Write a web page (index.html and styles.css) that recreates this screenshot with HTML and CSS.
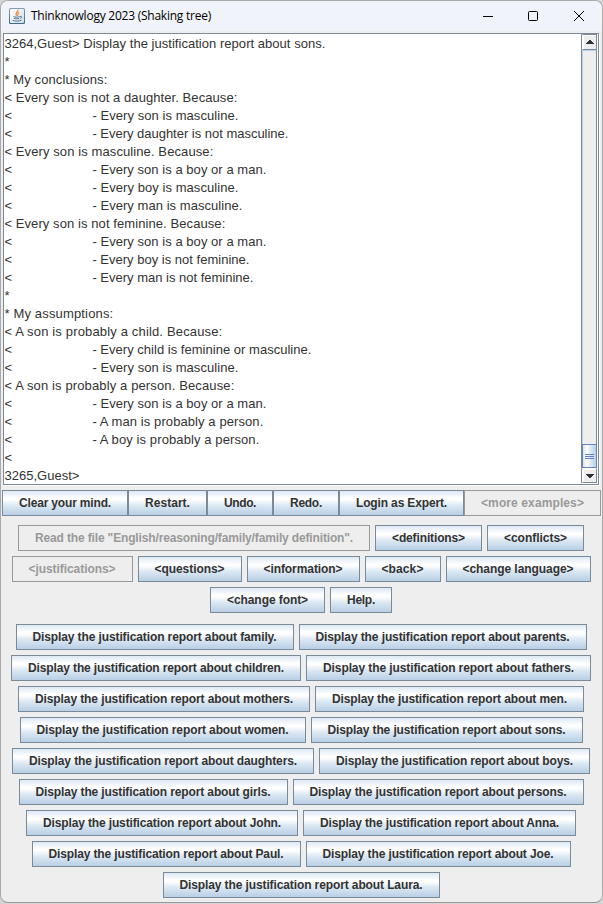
FILE: index.html
```html
<!DOCTYPE html>
<html lang="en">
<head>
<meta charset="utf-8">
<title>Thinknowlogy 2023 (Shaking tree)</title>
<link rel="stylesheet" href="styles.css">
</head>
<body>
<div class="window">
  <header class="titlebar">
    <svg class="logo" width="16" height="16" viewBox="0 0 16 16">
      <defs><linearGradient id="tile" x2="0" y2="1"><stop offset="0" stop-color="#7e9fb7"/><stop offset="1" stop-color="#3f6886"/></linearGradient>
      <linearGradient id="face" x2="1" y2="1"><stop offset="0" stop-color="#fff"/><stop offset="1" stop-color="#d3dde5"/></linearGradient></defs>
      <rect width="16" height="16" rx="1.5" fill="url(#tile)"/>
      <rect x="1" y="1" width="14" height="14" rx="1" fill="url(#face)"/>
      <path d="M8.8 1.8C9.5 4 5.2 4.7 7.5 8M10.3 4.2C7.6 5.2 9.6 6.3 8.6 7.8" fill="none" stroke="#ed8333" stroke-width="1.2"/>
      <path d="M4.5 8.6c1 .7 5 .7 6.2 0M5 10.3c1.300.6 4 .6 5.200 0M3.500 12.300c2 1 7 1 8.800 0M11 8.500c2-.6 2.200 1.400.1 2" fill="none" stroke="#517895" stroke-width="1"/>
    </svg>
    <span class="title fit" style="--w:180px">Thinknowlogy 2023 (Shaking tree)</span>
    <svg class="controls" width="104" height="12" viewBox="0 0 104 12" fill="none" stroke="#000">
      <path d="M0 6.500h10"/>
      <rect x="45.500" y="1.500" width="9" height="9" rx="1"/>
      <path d="M91 1l10 10M101 1L91 11"/>
    </svg>
  </header>
  <main class="console">
    <div class="log">
      <p><span class="fit" style="--w:321px">3264,Guest&gt; Display the justification report about sons.</span></p>
      <p>*</p>
      <p><span class="fit" style="--w:103px">* My conclusions:</span></p>
      <p><span class="fit" style="--w:233px">&lt; Every son is not a daughter. Because:</span></p>
      <p><i>&lt;</i><span class="fit" style="--w:146px">- Every son is masculine.</span></p>
      <p><i>&lt;</i><span class="fit" style="--w:196px">- Every daughter is not masculine.</span></p>
      <p><span class="fit" style="--w:209px">&lt; Every son is masculine. Because:</span></p>
      <p><i>&lt;</i><span class="fit" style="--w:174px">- Every son is a boy or a man.</span></p>
      <p><i>&lt;</i><span class="fit" style="--w:146px">- Every boy is masculine.</span></p>
      <p><i>&lt;</i><span class="fit" style="--w:150px">- Every man is masculine.</span></p>
      <p><span class="fit" style="--w:221px">&lt; Every son is not feminine. Because:</span></p>
      <p><i>&lt;</i><span class="fit" style="--w:174px">- Every son is a boy or a man.</span></p>
      <p><i>&lt;</i><span class="fit" style="--w:157px">- Every boy is not feminine.</span></p>
      <p><i>&lt;</i><span class="fit" style="--w:161px">- Every man is not feminine.</span></p>
      <p>*</p>
      <p><span class="fit" style="--w:109px">* My assumptions:</span></p>
      <p><span class="fit" style="--w:218px">&lt; A son is probably a child. Because:</span></p>
      <p><i>&lt;</i><span class="fit" style="--w:219px">- Every child is feminine or masculine.</span></p>
      <p><i>&lt;</i><span class="fit" style="--w:146px">- Every son is masculine.</span></p>
      <p><span class="fit" style="--w:230px">&lt; A son is probably a person. Because:</span></p>
      <p><i>&lt;</i><span class="fit" style="--w:174px">- Every son is a boy or a man.</span></p>
      <p><i>&lt;</i><span class="fit" style="--w:171px">- A man is probably a person.</span></p>
      <p><i>&lt;</i><span class="fit" style="--w:167px">- A boy is probably a person.</span></p>
      <p>&lt;</p>
      <p><span class="fit" style="--w:75px">3265,Guest&gt;</span></p>
    </div>
    <div class="scrollbar">
      <div class="arrow up"><svg width="8" height="4" shape-rendering="crispEdges"><path d="M3 0h2v1h1v1h1v1h1v1H0V3h1V2h1V1h1z" fill="#333"/></svg></div>
      <div class="track"><div class="thumb"><b></b><b></b><b></b></div></div>
      <div class="arrow down"><svg width="8" height="4" shape-rendering="crispEdges"><path d="M0 0h8v1H7v1H6v1H5v1H3V3H2V2H1V1H0z" fill="#333"/></svg></div>
    </div>
  </main>
  <nav class="toolbar">
    <button style="--w:92px"><span class="fit">Clear your mind.</span></button>
    <button style="--w:45px"><span class="fit">Restart.</span></button>
    <button style="--w:32px"><span class="fit">Undo.</span></button>
    <button style="--w:32px"><span class="fit">Redo.</span></button>
    <button style="--w:91px"><span class="fit">Login as Expert.</span></button>
    <button style="--w:103px" disabled><span class="fit">&lt;more examples&gt;</span></button>
  </nav>
  <section class="group topics">
    <div class="row">
      <button style="--w:318px" disabled><span class="fit">Read the file "English/reasoning/family/family definition".</span></button>
      <button style="--w:73px"><span class="fit">&lt;definitions&gt;</span></button>
      <button style="--w:63px"><span class="fit">&lt;conflicts&gt;</span></button>
    </div>
    <div class="row">
      <button style="--w:87px" disabled><span class="fit">&lt;justifications&gt;</span></button>
      <button style="--w:70px"><span class="fit">&lt;questions&gt;</span></button>
      <button style="--w:79px"><span class="fit">&lt;information&gt;</span></button>
      <button style="--w:42px"><span class="fit">&lt;back&gt;</span></button>
      <button style="--w:111px"><span class="fit">&lt;change language&gt;</span></button>
    </div>
    <div class="row">
      <button style="--w:81px"><span class="fit">&lt;change font&gt;</span></button>
      <button style="--w:28px"><span class="fit">Help.</span></button>
    </div>
  </section>
  <section class="group reports">
    <div class="row">
      <button style="--w:244px"><span class="fit">Display the justification report about family.</span></button>
      <button style="--w:254px"><span class="fit">Display the justification report about parents.</span></button>
    </div>
    <div class="row">
      <button style="--w:256px"><span class="fit">Display the justification report about children.</span></button>
      <button style="--w:251px"><span class="fit">Display the justification report about fathers.</span></button>
    </div>
    <div class="row">
      <button style="--w:258px"><span class="fit">Display the justification report about mothers.</span></button>
      <button style="--w:235px"><span class="fit">Display the justification report about men.</span></button>
    </div>
    <div class="row">
      <button style="--w:252px"><span class="fit">Display the justification report about women.</span></button>
      <button style="--w:238px"><span class="fit">Display the justification report about sons.</span></button>
    </div>
    <div class="row">
      <button style="--w:268px"><span class="fit">Display the justification report about daughters.</span></button>
      <button style="--w:237px"><span class="fit">Display the justification report about boys.</span></button>
    </div>
    <div class="row">
      <button style="--w:235px"><span class="fit">Display the justification report about girls.</span></button>
      <button style="--w:257px"><span class="fit">Display the justification report about persons.</span></button>
    </div>
    <div class="row">
      <button style="--w:238px"><span class="fit">Display the justification report about John.</span></button>
      <button style="--w:239px"><span class="fit">Display the justification report about Anna.</span></button>
    </div>
    <div class="row">
      <button style="--w:235px"><span class="fit">Display the justification report about Paul.</span></button>
      <button style="--w:231px"><span class="fit">Display the justification report about Joe.</span></button>
    </div>
    <div class="row">
      <button style="--w:243px"><span class="fit">Display the justification report about Laura.</span></button>
    </div>
  </section>
</div>
<script src="fit.js"></script>
</body>
</html>
```
FILE: styles.css
```css
* { box-sizing: border-box; }
body { margin: 0; background: #d5d5d5; font-family: "Liberation Sans", Arial, sans-serif; color: #333; }
.window {
  width: 603px; height: 903px; overflow: hidden;
  border: 1px solid #a9a9a9; border-bottom-color: #999; border-radius: 8px;
  background: #eee;
}
.titlebar {
  display: flex; align-items: center; height: 30px; padding: 0 15px 0 8px;
  background: #f0f3fa; color: #000;
}
.title { margin-left: 6px; font: 12px/16px "Open Sans", "Noto Sans", sans-serif; }
.controls { margin-left: auto; }
.fit { white-space: pre; }
.console {
  display: flex; height: 452px; margin: 2px 3px 0 2px;
  border: 1px solid #7a8a99; box-shadow: 1px 1px 0 #fff; background: #fff;
}
.log { flex: 1; font-size: 13px; line-height: 18px; padding: 1px 0 0 0.4px; }
.log p { display: flex; height: 18px; margin: 0; white-space: pre; }
.log i { width: 88px; font-style: normal; }
.scrollbar {
  display: flex; flex-direction: column; width: 17px; margin: 0 0 1px; padding-right: 1px;
  border-left: 1px solid #7a8a99; background: #fff;
}
.arrow { display: grid; place-items: center; height: 16px; background: #eee; border: 1px solid #fff; border-right: 1px solid #7a8a99; border-top-color: #7a8a99; box-shadow: inset 1px 1px #fff; }
.up { border-bottom-color: #7a8a99; }
.down { height: 15px; border-bottom-color: #7a8a99; border-top-color: #fff; }
.track { flex: 1; display: flex; flex-direction: column; justify-content: flex-end; background: #eee; border-left: 1px solid #b8cfe5; border-top: 1px solid #b8cfe5; border-right: 1px solid #7a8a99; }
.thumb {
  display: flex; flex-direction: column; align-items: center; justify-content: center; gap: 1px;
  height: 24px; margin: 0 -1px; padding-top: 1px; border: 1px solid #6382bf;
  background: linear-gradient(90deg, #d8e5f1, #fff 30%, #dce8f3 60%, #b8cfe5);
}
.thumb b { width: 9px; height: 1px; background: #6382bf; }
.toolbar { display: flex; margin: 5px 0 0 1px; }
.row { display: flex; justify-content: center; gap: 5px; }
.group { display: grid; gap: 5px; padding-right: 1px; }
.topics { margin-top: 9px; }
.reports { margin-top: 11px; }
button {
  flex: none; box-sizing: content-box; width: var(--w); height: 24px; margin: 0; padding: 0 16px;
  border: 1px solid #7a8a99; border-radius: 0;
  background: linear-gradient(#dde8f3, #fff 30%, #fff 36%, #dce8f3 60%, #b8cfe5);
  color: #333; font: bold 12px/24px "Liberation Sans", Arial, sans-serif;
  text-align: left; white-space: pre;
}
button:disabled { border-color: #999; background: #eee; color: #999; }
```
FILE: fit.js
```js
// Spread glyphs so each label fills its declared width.
document.querySelectorAll('.fit').forEach(el => {
  const target = parseFloat(getComputedStyle(el).getPropertyValue('--w'));
  const natural = el.getBoundingClientRect().width;
  el.style.letterSpacing = (target - natural) / el.textContent.length + 'px';
});
```
